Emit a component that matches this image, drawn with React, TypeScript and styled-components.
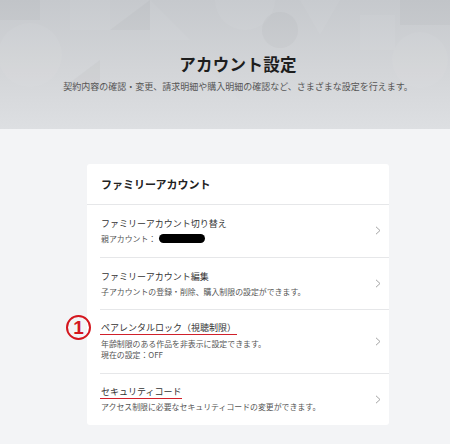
import React from 'react';
import styled, { createGlobalStyle } from 'styled-components';

const GlobalStyle = createGlobalStyle`
  html, body {
    margin: 0;
    padding: 0;
    background: #f3f4f6;
  }
  body {
    font-family: "Noto Sans CJK JP", "Noto Sans", sans-serif;
    color: #333;
  }
`;

const Banner = styled.header`
  position: relative;
  height: 129px;
  overflow: hidden;
  background: linear-gradient(180deg, #c6c9cd 0%, #d3d5d8 55%, #dddfe2 100%);
`;

const Pattern = styled.svg`
  position: absolute;
  inset: 0;
  width: 100%;
  height: 100%;
`;

const BannerInner = styled.div`
  position: relative;
  display: flex;
  flex-direction: column;
  align-items: center;
  padding: 52px 0 0 26px;
`;

const PageTitle = styled.h1`
  margin: 0;
  font-size: 16.5px;
  line-height: 24px;
  font-weight: 700;
  color: #1e1e1e;
  letter-spacing: 0.3px;
`;

const PageLead = styled.p`
  margin: 5px 0 0;
  font-size: 9px;
  line-height: 12px;
  color: #555;
  white-space: nowrap;
`;

const Main = styled.main`
  display: flex;
  justify-content: center;
  padding: 35px 0 20px 26px;
`;

const Card = styled.section`
  width: 302px;
  background: #fff;
  border-radius: 3px;
`;

const CardHeader = styled.h2`
  margin: 0;
  padding: 0 14px;
  height: 40px;
  display: flex;
  align-items: center;
  font-size: 11px;
  font-weight: 700;
  color: #222;
  border-bottom: 1px solid #e6e7e9;
`;

const Row = styled.div<{ $last?: boolean }>`
  position: relative;
  display: flex;
  align-items: center;
  margin-left: 13px;
  padding: 12px 8px 12px 1px;
  border-bottom: ${(p) => (p.$last ? 'none' : '1px solid #e6e7e9')};
`;

const RowText = styled.div`
  flex: 1;
  display: flex;
  flex-direction: column;
`;

const RowTitle = styled.span<{ $marked?: boolean }>`
  align-self: flex-start;
  font-size: 9px;
  line-height: 13px;
  color: #333;
  margin-bottom: 3px;
  ${(p) =>
    p.$marked &&
    `
    margin-left: -1px;
    padding: 0 1px;
    border-bottom: 1.5px solid #d0202a;
    line-height: 12px;
    margin-bottom: 2.5px;
  `}
`;

const RowSub = styled.span`
  font-size: 7.9px;
  line-height: 11.5px;
  color: #555;
`;

const Redacted = styled.span`
  display: inline-block;
  width: 46px;
  height: 9px;
  margin-left: 3px;
  vertical-align: -1px;
  background: #000;
  border-radius: 5px;
`;

const Badge = styled.span`
  position: absolute;
  left: -34px;
  top: 5px;
  width: 21px;
  height: 21px;
  border: 2.5px solid #d4161e;
  border-radius: 50%;
  display: flex;
  align-items: center;
  justify-content: center;
  color: #d4161e;
  font-family: "Liberation Sans", Arial, sans-serif;
  font-weight: 700;
  font-size: 19px;
  line-height: 1;
`;

const Chevron = () => (
  <svg width="6" height="9" viewBox="0 0 6 9" style={{ flexShrink: 0 }}>
    <polyline points="1,0.8 5,4.5 1,8.2" fill="none" stroke="#9a9a9a" strokeWidth="0.9" />
  </svg>
);

const rows = [
  {
    title: 'ファミリーアカウント切り替え',
    subs: ['親アカウント：'],
    redacted: true,
  },
  {
    title: 'ファミリーアカウント編集',
    subs: ['子アカウントの登録・削除、購入制限の設定ができます。'],
  },
  {
    title: 'ペアレンタルロック（視聴制限）',
    subs: ['年齢制限のある作品を非表示に設定できます。', '現在の設定：OFF'],
    marked: true,
    badge: '1',
  },
  {
    title: 'セキュリティコード',
    subs: ['アクセス制限に必要なセキュリティコードの変更ができます。'],
    marked: true,
  },
];

export default function App() {
  return (
    <>
      <GlobalStyle />
      <Banner>
        <Pattern viewBox="0 0 450 129" preserveAspectRatio="none">
          <g fill="#ffffff" opacity="0.045">
            <circle cx="30" cy="55" r="32" />
            <rect x="70" y="0" width="40" height="30" />
            <path d="M150 0 L190 40 L150 40 Z" />
            <circle cx="245" cy="0" r="30" />
            <path d="M300 0 L340 0 L320 35 Z" />
            <rect x="360" y="15" width="35" height="35" />
            <circle cx="420" cy="60" r="28" />
            <path d="M200 60 L240 100 L200 100 Z" />
          </g>
          <g fill="#000000" opacity="0.02">
            <rect x="0" y="0" width="40" height="20" />
            <path d="M110 30 L150 0 L150 30 Z" />
            <circle cx="280" cy="30" r="18" />
            <rect x="400" y="0" width="50" height="25" />
            <path d="M60 90 L100 60 L100 90 Z" />
          </g>
        </Pattern>
        <BannerInner>
          <PageTitle>アカウント設定</PageTitle>
          <PageLead>
            契約内容の確認・変更、請求明細や購入明細の確認など、さまざまな設定を行えます。
          </PageLead>
        </BannerInner>
      </Banner>
      <Main>
        <Card>
          <CardHeader>ファミリーアカウント</CardHeader>
          {rows.map((r, i) => (
            <Row key={r.title} $last={i === rows.length - 1}>
              {r.badge && <Badge>{r.badge}</Badge>}
              <RowText>
                <RowTitle $marked={r.marked}>{r.title}</RowTitle>
                {r.subs.map((s) => (
                  <RowSub key={s}>
                    {s}
                    {r.redacted && <Redacted />}
                  </RowSub>
                ))}
              </RowText>
              <Chevron />
            </Row>
          ))}
        </Card>
      </Main>
    </>
  );
}
